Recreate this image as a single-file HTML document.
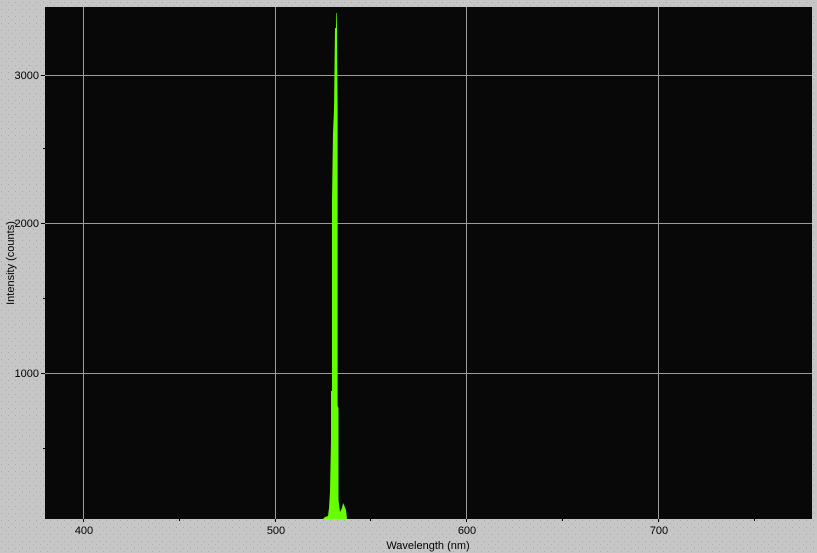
<!DOCTYPE html>
<html><head><style>
html,body{margin:0;padding:0;}
body{width:817px;height:553px;overflow:hidden;background:#c6c6c6;font-family:"Liberation Sans",sans-serif;}
</style></head><body>
<svg width="817" height="553" xmlns="http://www.w3.org/2000/svg" style="display:block">
<defs>
<pattern id="d" width="7" height="7" patternUnits="userSpaceOnUse">
<rect width="7" height="7" fill="#c6c6c6"/>
<rect x="1" y="2" width="1" height="1" fill="#a8a8a8"/>
<rect x="5" y="5" width="1" height="1" fill="#b0b0b0"/>
</pattern>
</defs>
<rect width="817" height="553" fill="url(#d)"/>
<rect x="45" y="7" width="767" height="512" fill="#080808"/>
<g stroke="#9c9c9c" stroke-width="1">
<line x1="83.5" y1="7" x2="83.5" y2="519"/>
<line x1="275.5" y1="7" x2="275.5" y2="519"/>
<line x1="466.5" y1="7" x2="466.5" y2="519"/>
<line x1="658.5" y1="7" x2="658.5" y2="519"/>
<line x1="45" y1="75.5" x2="812" y2="75.5"/>
<line x1="45" y1="223.5" x2="812" y2="223.5"/>
<line x1="45" y1="373.5" x2="812" y2="373.5"/>
</g>
<g stroke="#000" stroke-width="1">
<line x1="41" y1="75.5" x2="45" y2="75.5"/>
<line x1="41" y1="223.5" x2="45" y2="223.5"/>
<line x1="41" y1="373.5" x2="45" y2="373.5"/>
<line x1="43" y1="148.5" x2="45" y2="148.5"/>
<line x1="43" y1="298.5" x2="45" y2="298.5"/>
<line x1="43" y1="448.5" x2="45" y2="448.5"/>
<line x1="83.5" y1="519" x2="83.5" y2="522"/>
<line x1="275.5" y1="519" x2="275.5" y2="522"/>
<line x1="466.5" y1="519" x2="466.5" y2="522"/>
<line x1="658.5" y1="519" x2="658.5" y2="522"/>
<line x1="179.5" y1="519" x2="179.5" y2="521"/>
<line x1="370.5" y1="519" x2="370.5" y2="521"/>
<line x1="562.5" y1="519" x2="562.5" y2="521"/>
<line x1="754.5" y1="519" x2="754.5" y2="521"/>
</g>
<polygon fill="#66ff00" points="323,519 325,517 328,516 329,508 330,492 331,440 331,391 332,391 332,200 333,133 334,110 335,28 336,28 336,13 336.6,13 337,28 337.6,110 337.6,300 337.6,406 338.5,408 338.5,500 340,512 342,508 343,503 344,505 346,510 347,519"/>
<g font-size="11" fill="#000">
<text x="39" y="79" text-anchor="end">3000</text>
<text x="39" y="227" text-anchor="end">2000</text>
<text x="39" y="377" text-anchor="end">1000</text>
<text x="84" y="534" text-anchor="middle">400</text>
<text x="276" y="534" text-anchor="middle">500</text>
<text x="467" y="534" text-anchor="middle">600</text>
<text x="659" y="534" text-anchor="middle">700</text>
<text x="428" y="549" text-anchor="middle">Wavelength (nm)</text>
<text transform="translate(14,263) rotate(-90)" text-anchor="middle">Intensity (counts)</text>
</g>
</svg>
</body></html>
